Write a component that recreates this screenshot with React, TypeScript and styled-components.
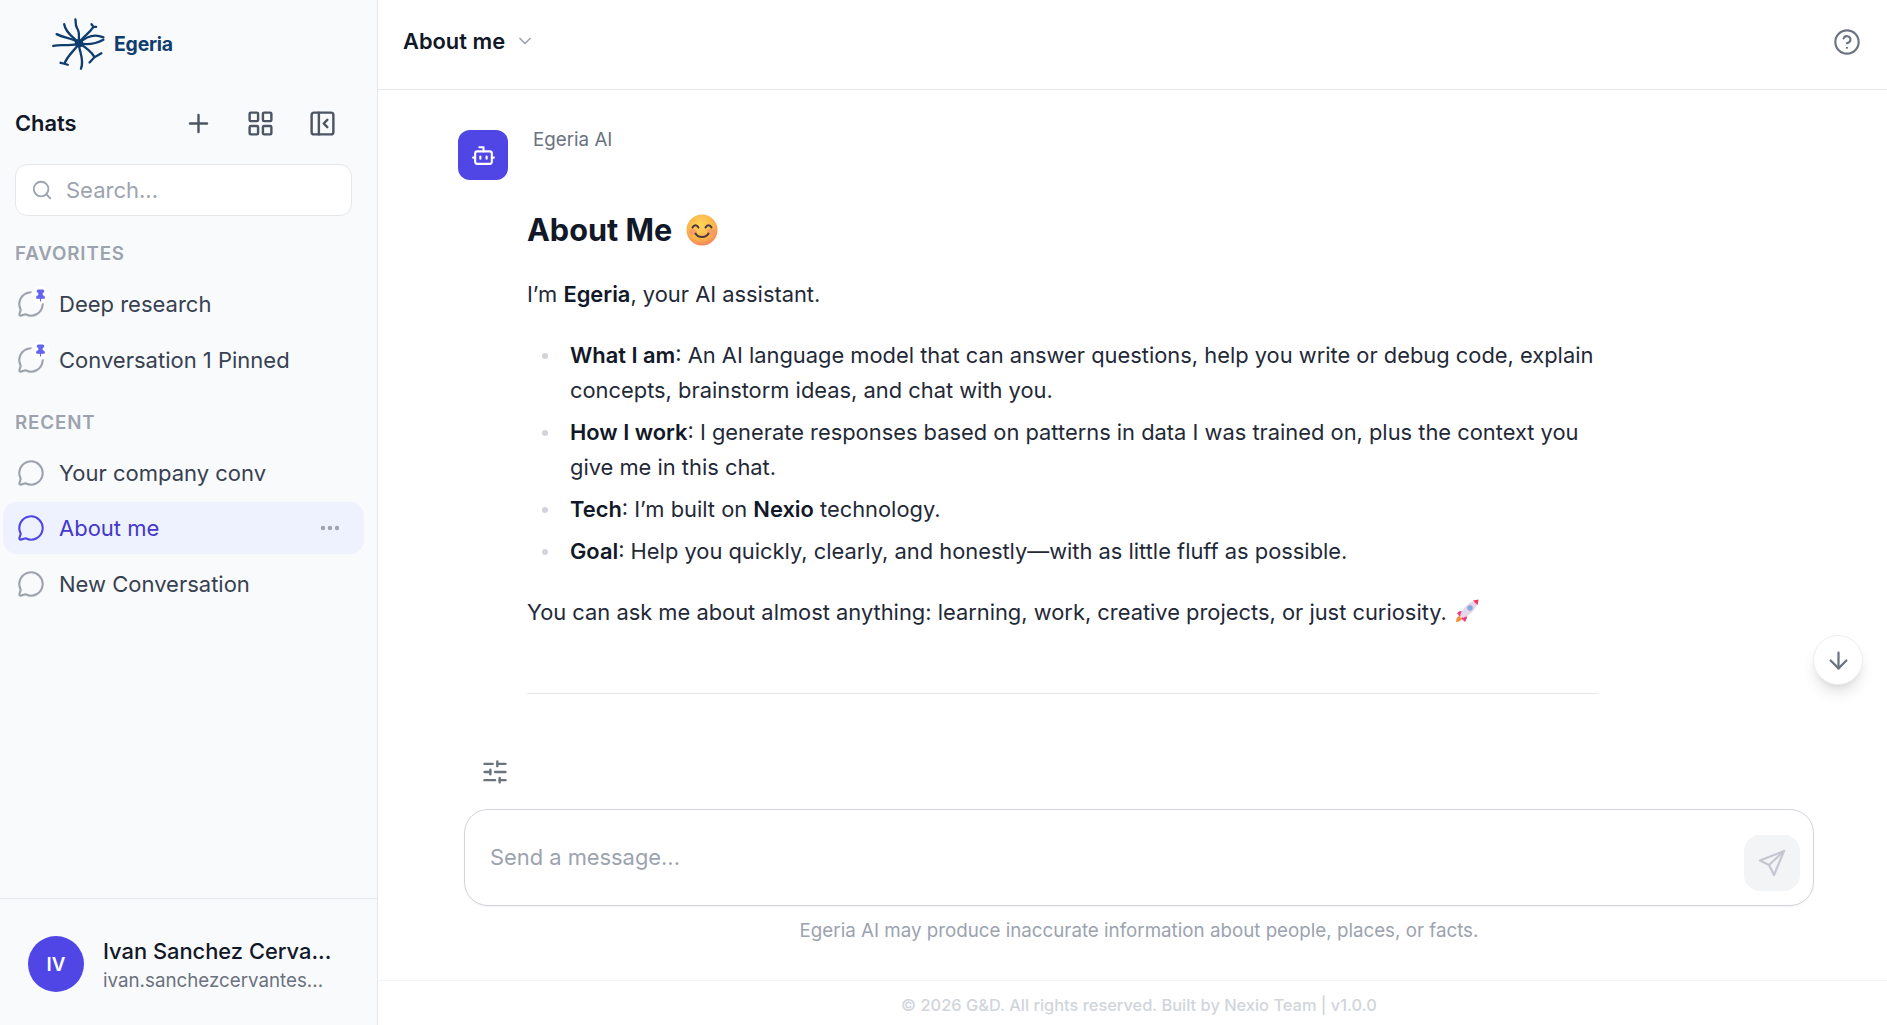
import React from "react";
import styled, { createGlobalStyle } from "styled-components";
import {
  ArrowDown,
  Bot,
  ChevronDown,
  CircleHelp,
  Ellipsis,
  LayoutGrid,
  MessageCircle,
  PanelLeftClose,
  Pin,
  Plus,
  Search,
  SlidersHorizontal,
} from "lucide-react";

const GlobalStyle = createGlobalStyle`
  html, body {
    margin: 0;
    height: 100%;
    overflow: hidden;
    background: #fff;
  }
  body {
    font-family: Inter, "Liberation Sans", sans-serif;
    color: #111827;
  }
  #root {
    height: 100%;
  }
`;

const Page = styled.div`
  display: flex;
  height: 1025px;
  width: 1887px;
`;

const Sidebar = styled.aside`
  display: flex;
  flex-direction: column;
  flex: 0 0 378px;
  box-sizing: border-box;
  background: #f9fafb;
  border-right: 1px solid #e5e7eb;
`;

const LogoRow = styled.div`
  display: flex;
  align-items: center;
  gap: 8px;
  height: 88px;
  padding-left: 52px;
  margin-bottom: 2px;
`;

const LogoText = styled.span`
  font-size: 19.4px;
  font-weight: 700;
  color: #0f3d6e;
  letter-spacing: -0.2px;
`;

const ChatsHeader = styled.div`
  display: flex;
  align-items: center;
  height: 66px;
  padding: 0 23.5px 0 15px;
`;

const ChatsTitle = styled.h2`
  flex: 1;
  margin: 0;
  font-size: 21.875px;
  font-weight: 600;
  color: #111827;
`;

const IconButtons = styled.div`
  display: flex;
  color: #4b5563;
`;

const IconSlot = styled.span`
  display: flex;
  justify-content: center;
  width: 62px;
`;

const SearchBox = styled.div`
  display: flex;
  align-items: center;
  gap: 13px;
  box-sizing: border-box;
  height: 52px;
  margin: 8px 25px 0 15px;
  padding: 0 15px;
  background: #fff;
  border: 1px solid #e5e7eb;
  border-radius: 12px;
  color: #9ca3af;
  font-size: 22px;
`;

const SectionLabel = styled.div`
  margin: 0 0 0 15px;
  height: 49px;
  line-height: 49px;
  font-size: 18.75px;
  font-weight: 600;
  letter-spacing: 0.85px;
  color: #9ca3af;
`;

const ChatList = styled.div<{ $top: number }>`
  margin-top: ${(p) => p.$top}px;
`;

const Items = styled.div`
  display: flex;
  flex-direction: column;
  gap: 3.5px;
  margin: 0 13px 0 3px;
`;

const Item = styled.div<{ $active?: boolean }>`
  display: flex;
  align-items: center;
  gap: 14px;
  height: 52px;
  padding: 0 14px;
  border-radius: 14px;
  font-size: 22px;
  color: ${(p) => (p.$active ? "#4338ca" : "#374151")};
  background: ${(p) => (p.$active ? "#eef2ff" : "transparent")};
`;

const ItemIcon = styled.span<{ $active?: boolean }>`
  position: relative;
  display: flex;
  color: ${(p) => (p.$active ? "#4f46e5" : "#9ca3af")};
`;

const PinBadge = styled.span`
  position: absolute;
  top: -4px;
  right: -4px;
  display: flex;
  align-items: center;
  justify-content: center;
  width: 18px;
  height: 18px;
  border-radius: 50%;
  background: #fff;
  color: #6366f1;
`;

const ItemLabel = styled.span`
  flex: 1;
`;

const ItemMenu = styled.span`
  display: flex;
  color: #9ca3af;
  margin-right: 8px;
`;

const UserFooter = styled.div`
  display: flex;
  align-items: center;
  gap: 19px;
  box-sizing: border-box;
  margin-top: auto;
  height: 127px;
  padding: 4px 0 0 28px;
  border-top: 1px solid #e5e7eb;
`;

const UserAvatar = styled.div`
  display: flex;
  align-items: center;
  justify-content: center;
  width: 56px;
  height: 56px;
  border-radius: 50%;
  background: #4f46e5;
  color: #fff;
  font-size: 18.75px;
  font-weight: 600;
`;

const UserInfo = styled.div`
  padding-top: 3px;
`;

const UserName = styled.div`
  font-size: 21.875px;
  font-weight: 500;
  color: #111827;
  line-height: 30px;
`;

const UserEmail = styled.div`
  font-size: 18.75px;
  color: #6b7280;
  line-height: 30px;
`;

const Main = styled.main`
  position: relative;
  display: flex;
  flex-direction: column;
  flex: 1;
  min-width: 0;
`;

const TopBar = styled.header`
  display: flex;
  align-items: center;
  box-sizing: border-box;
  height: 90px;
  padding: 0 26px 8px 25px;
  border-bottom: 1px solid #e5e7eb;
`;

const TopTitle = styled.h1`
  margin: 0;
  font-size: 21.875px;
  font-weight: 600;
  color: #111827;
`;

const TopChevron = styled.span`
  display: flex;
  flex: 1;
  margin-left: 10px;
  color: #9ca3af;
`;

const HelpIcon = styled.span`
  display: flex;
  margin-top: 2px;
  color: #6b7280;
`;

const Conversation = styled.section`
  display: flex;
  gap: 25px;
  padding: 40px 0 0 80px;
`;

const BotAvatar = styled.div`
  display: flex;
  align-items: center;
  justify-content: center;
  flex: 0 0 50px;
  height: 50px;
  border-radius: 12px;
  background: #4f46e5;
  color: #fff;
`;

const Sender = styled.div`
  font-size: 18.75px;
  font-weight: 400;
  line-height: 20px;
  color: #6b7280;
`;

const Answer = styled.article`
  width: 1071px;
  margin: 0 0 0 -6px;
  padding-bottom: 62.6px;
  border-bottom: 1px solid #e5e7eb;
  font-size: 21.875px;
  line-height: 35.5px;
  color: #1f2937;
`;

const AnswerTitle = styled.h2`
  display: flex;
  align-items: center;
  gap: 14px;
  margin: 60px 0 0;
  font-size: 30.625px;
  line-height: 40px;
  font-weight: 700;
  color: #111827;
`;

const Paragraph = styled.p`
  margin: 0;
  padding-top: 27px;
`;

const ClosingLine = styled.p`
  margin: 0;
`;

const Bullets = styled.ul`
  margin: 25px 0 25.5px;
  padding: 0 0 0 43px;
  list-style: none;
  li {
    position: relative;
    margin-bottom: 6.3px;
  }
  li::before {
    content: "";
    position: absolute;
    top: 15px;
    left: -28px;
    width: 6px;
    height: 6px;
    border-radius: 50%;
    background: #d1d5db;
  }
  strong {
    font-weight: 600;
    color: #111827;
  }
`;

const Strong = styled.strong`
  font-weight: 600;
  color: #111827;
`;

const InlineEmoji = styled.svg`
  display: inline-block;
  vertical-align: -3px;
  margin-left: 2px;
`;

const Tools = styled.div`
  display: flex;
  padding: 64px 0 0 103px;
  color: #6b7280;
`;

const Composer = styled.div`
  display: flex;
  align-items: center;
  justify-content: space-between;
  box-sizing: border-box;
  height: 97px;
  margin: 23px 73px 0 86px;
  padding: 12px 13px 0 25px;
  border: 1px solid #d1d5db;
  border-radius: 24px;
  box-shadow: 0 1px 2px rgba(0, 0, 0, 0.05);
`;

const Placeholder = styled.span`
  font-size: 21.875px;
  color: #9ca3af;
  margin-top: -12px;
`;

const SendButton = styled.div`
  display: flex;
  align-items: center;
  justify-content: center;
  width: 56px;
  height: 56px;
  border-radius: 16px;
  background: #f3f4f6;
  color: #c4c7cf;
`;

const Disclaimer = styled.div`
  margin: 12px 73px 0 86px;
  text-align: center;
  font-size: 18.75px;
  line-height: 26px;
  color: #9ca3af;
`;

const Copyright = styled.footer`
  display: flex;
  align-items: center;
  justify-content: center;
  flex: 1;
  margin-top: 36px;
  padding: 4px 73px 0 86px;
  border-top: 1px solid #f3f4f6;
  font-size: 16.4px;
  font-weight: 500;
  color: #d1d5db;
`;

const ScrollDown = styled.div`
  position: absolute;
  top: 635px;
  left: 1435px;
  display: flex;
  align-items: center;
  justify-content: center;
  box-sizing: border-box;
  width: 50px;
  height: 50px;
  border-radius: 50%;
  background: #fff;
  border: 1px solid #eceef1;
  box-shadow: 0 10px 15px -3px rgba(0, 0, 0, 0.12), 0 4px 6px -4px rgba(0, 0, 0, 0.1);
  color: #6b7280;
`;

const LogoMark = () => (
  <svg width="54" height="54" viewBox="66 38 164 164" fill="none" stroke="#0f3d6e" strokeLinecap="round" strokeLinejoin="round">
    <circle cx="148" cy="118" r="13" fill="#0f3d6e" stroke="none" />
    <g strokeWidth="7">
      <path d="M148 118C146 98 152 86 142 72C136 62 139 52 137 45" />
      <path d="M148 118C158 98 176 92 192 68M186 60 192 68 200 68" />
      <path d="M148 118C165 102 190 86 222 100" />
      <path d="M148 118C170 122 195 122 222 107" />
      <path d="M148 118C168 130 185 142 195 160M195 160 216 148M195 160 180 176" />
      <path d="M148 118C146 140 166 165 154 195" />
      <path d="M148 118C135 140 112 155 104 180M92 177 104 180 114 183" />
      <path d="M148 118C125 130 98 118 70 126" />
      <path d="M148 118C130 100 105 104 80 90" />
      <path d="M148 118C135 100 108 90 103 60" />
    </g>
  </svg>
);

const SmileEmoji = () => (
  <svg width="32" height="32" viewBox="0 0 32 32">
    <defs>
      <radialGradient id="smileFace" cx="45%" cy="35%" r="70%">
        <stop offset="0%" stopColor="#ffd65c" />
        <stop offset="65%" stopColor="#fbb34a" />
        <stop offset="100%" stopColor="#f4775e" />
      </radialGradient>
    </defs>
    <circle cx="16" cy="16" r="15.5" fill="url(#smileFace)" />
    <ellipse cx="7" cy="18" rx="4" ry="3" fill="#f58a7d" opacity="0.6" />
    <ellipse cx="25" cy="18" rx="4" ry="3" fill="#f58a7d" opacity="0.6" />
    <g fill="none" stroke="#4b3a3f" strokeWidth="2" strokeLinecap="round">
      <path d="M6.5 13.5C8 10.5 11 10.5 12.5 13.5" />
      <path d="M19.5 13.5C21 10.5 24 10.5 25.5 13.5" />
      <path d="M9.5 19.5C12 24 20 24 22.5 19.5" />
    </g>
  </svg>
);

const RocketEmoji = () => (
  <InlineEmoji width="24" height="24" viewBox="0 0 24 24">
    <path d="M1 23C1 20 2 18 4 17L7 20C6 22 4 23 1 23Z" fill="#f59338" />
    <path d="M5 12 2 14 5 18 9 13Z" fill="#f0397a" />
    <path d="M12 19 10 23 6 19 11 15Z" fill="#f0397a" />
    <path d="M5 16C8 9 13 4 19 2L22 5C20 11 15 16 8 19Z" fill="#e3d6e6" />
    <path d="M18 1.5C20 1 22 1 23.5 0.5C23.5 2 23 4 22.5 6Z" fill="#f0365f" />
    <circle cx="15" cy="9" r="2.4" fill="#6cb4f2" stroke="#a892c0" strokeWidth="0.8" />
  </InlineEmoji>
);

const SendIcon = () => (
  <svg width="30" height="30" viewBox="0 0 30 30" fill="none" stroke="currentColor" strokeWidth="2.2" strokeLinecap="round" strokeLinejoin="round">
    <path d="M27 3 3 12.5 12 17 17 27Z" />
    <path d="M27 3 12 17" />
  </svg>
);

const App = () => {
  return (
    <Page>
      <GlobalStyle />
      <Sidebar>
        <LogoRow>
          <LogoMark />
          <LogoText>Egeria</LogoText>
        </LogoRow>
        <ChatsHeader>
          <ChatsTitle>Chats</ChatsTitle>
          <IconButtons>
            <IconSlot>
              <Plus size={29} strokeWidth={2} />
            </IconSlot>
            <IconSlot>
              <LayoutGrid size={29} strokeWidth={2} />
            </IconSlot>
            <IconSlot>
              <PanelLeftClose size={29} strokeWidth={2} />
            </IconSlot>
          </IconButtons>
        </ChatsHeader>
        <SearchBox>
          <Search size={22} strokeWidth={2} />
          Search...
        </SearchBox>
        <ChatList $top={13}>
          <SectionLabel>FAVORITES</SectionLabel>
          <Items>
            {["Deep research", "Conversation 1 Pinned"].map((name) => (
              <Item key={name}>
                <ItemIcon>
                  <MessageCircle size={28} strokeWidth={1.8} />
                  <PinBadge>
                    <Pin size={13} fill="currentColor" strokeWidth={2} />
                  </PinBadge>
                </ItemIcon>
                <ItemLabel>{name}</ItemLabel>
              </Item>
            ))}
          </Items>
        </ChatList>
        <ChatList $top={12}>
          <SectionLabel>RECENT</SectionLabel>
          <Items>
            <Item>
              <ItemIcon>
                <MessageCircle size={28} strokeWidth={1.8} />
              </ItemIcon>
              <ItemLabel>Your company conv</ItemLabel>
            </Item>
            <Item $active>
              <ItemIcon $active>
                <MessageCircle size={28} strokeWidth={1.8} />
              </ItemIcon>
              <ItemLabel>About me</ItemLabel>
              <ItemMenu>
                <Ellipsis size={24} strokeWidth={2.4} />
              </ItemMenu>
            </Item>
            <Item>
              <ItemIcon>
                <MessageCircle size={28} strokeWidth={1.8} />
              </ItemIcon>
              <ItemLabel>New Conversation</ItemLabel>
            </Item>
          </Items>
        </ChatList>
        <UserFooter>
          <UserAvatar>IV</UserAvatar>
          <UserInfo>
            <UserName>Ivan Sanchez Cerva...</UserName>
            <UserEmail>ivan.sanchezcervantes...</UserEmail>
          </UserInfo>
        </UserFooter>
      </Sidebar>
      <Main>
        <TopBar>
          <TopTitle>About me</TopTitle>
          <TopChevron>
            <ChevronDown size={20} strokeWidth={2} />
          </TopChevron>
          <HelpIcon>
            <CircleHelp size={28} strokeWidth={1.8} />
          </HelpIcon>
        </TopBar>
        <Conversation>
          <BotAvatar>
            <Bot size={25} strokeWidth={2} />
          </BotAvatar>
          <div>
            <Sender>Egeria AI</Sender>
            <Answer>
              <AnswerTitle>
                About Me <SmileEmoji />
              </AnswerTitle>
              <Paragraph>
                I’m <Strong>Egeria</Strong>, your AI assistant.
              </Paragraph>
              <Bullets>
                <li>
                  <strong>What I am</strong>: An AI language model that can answer questions, help you write or debug code, explain concepts, brainstorm ideas, and chat with you.
                </li>
                <li>
                  <strong>How I work</strong>: I generate responses based on patterns in data I was trained on, plus the context you give me in this chat.
                </li>
                <li>
                  <strong>Tech</strong>: I’m built on <strong>Nexio</strong> technology.
                </li>
                <li>
                  <strong>Goal</strong>: Help you quickly, clearly, and honestly—with as little fluff as possible.
                </li>
              </Bullets>
              <ClosingLine>
                You can ask me about almost anything: learning, work, creative projects, or just curiosity. <RocketEmoji />
              </ClosingLine>
            </Answer>
          </div>
        </Conversation>
        <Tools>
          <SlidersHorizontal size={28} strokeWidth={2} />
        </Tools>
        <Composer>
          <Placeholder>Send a message...</Placeholder>
          <SendButton>
            <SendIcon />
          </SendButton>
        </Composer>
        <Disclaimer>Egeria AI may produce inaccurate information about people, places, or facts.</Disclaimer>
        <Copyright>© 2026 G&amp;D. All rights reserved. Built by Nexio Team | v1.0.0</Copyright>
        <ScrollDown>
          <ArrowDown size={27} strokeWidth={2} />
        </ScrollDown>
      </Main>
    </Page>
  );
};

export default App;
